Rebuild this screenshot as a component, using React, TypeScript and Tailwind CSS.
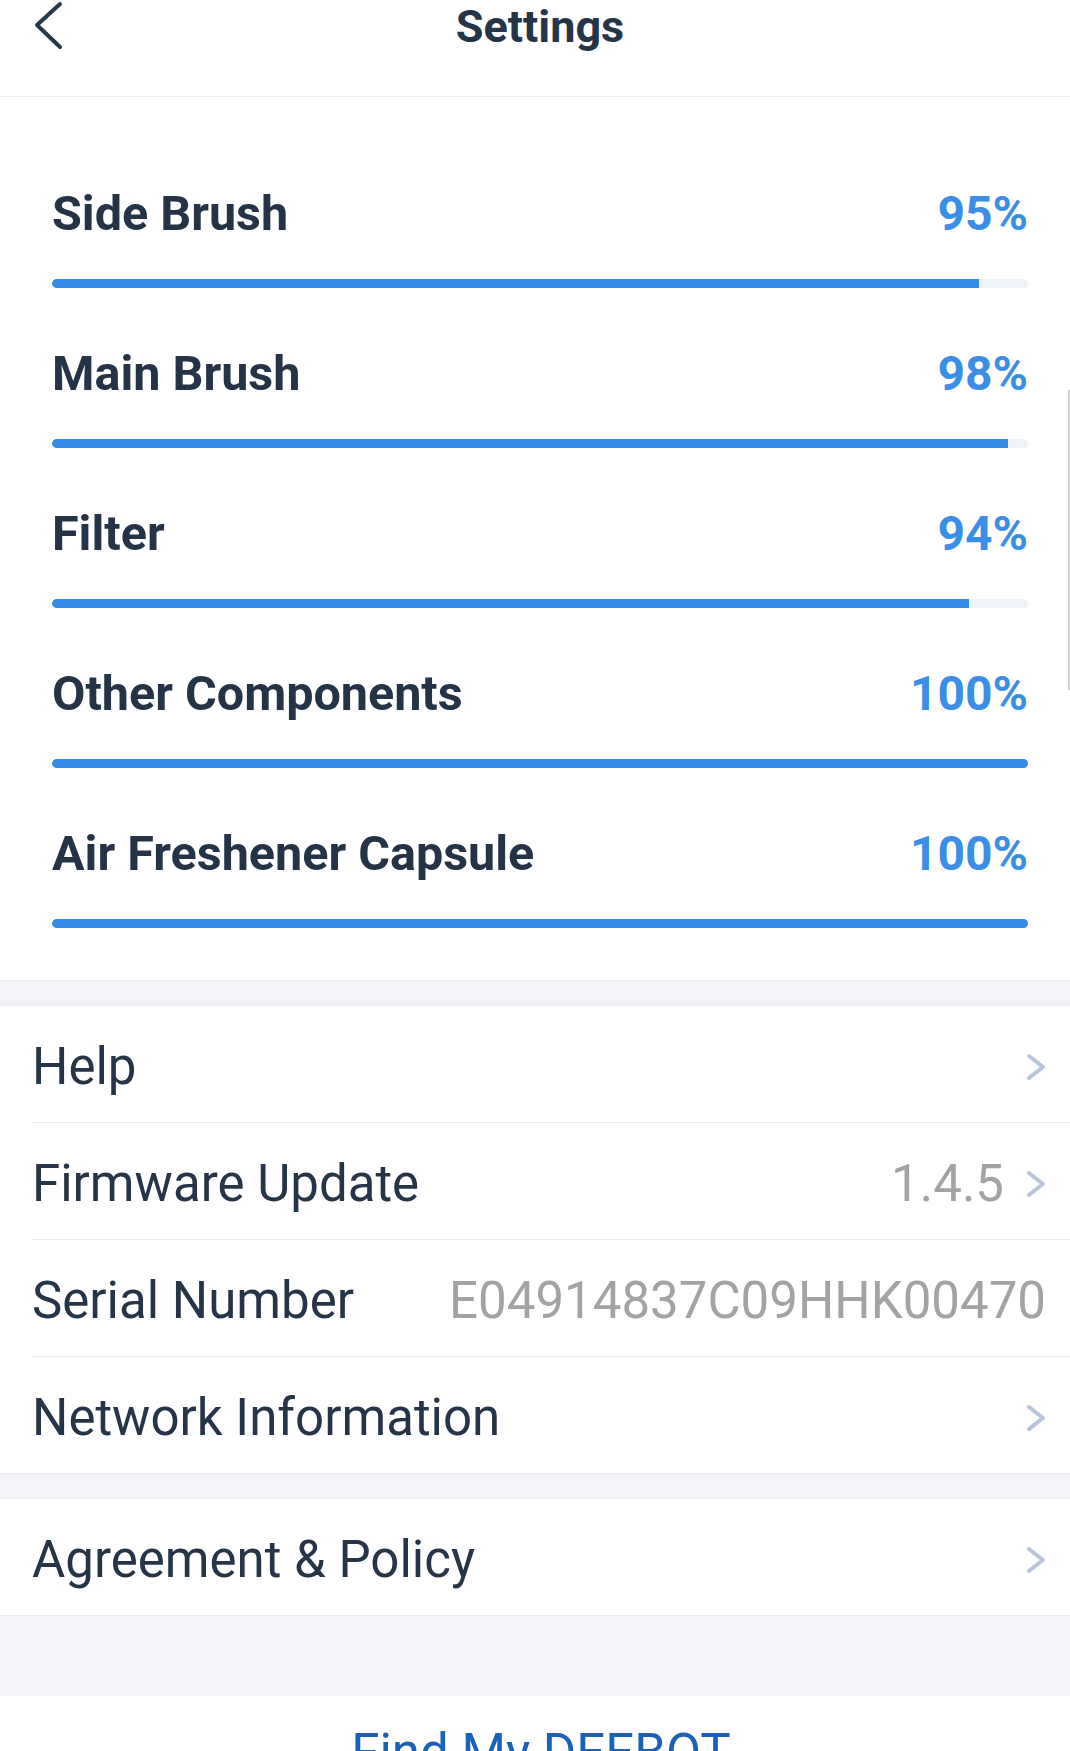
const PARTS: { name: string; value: number }[] = [
  { name: 'Side Brush', value: 95 },
  { name: 'Main Brush', value: 98 },
  { name: 'Filter', value: 94 },
  { name: 'Other Components', value: 100 },
  { name: 'Air Freshener Capsule', value: 100 },
];

function Chevron() {
  return (
    <svg width="20" height="28" viewBox="0 0 20 28" className="shrink-0">
      <path d="M3 3 L17 14 L3 25" fill="none" stroke="#b7c4d9" strokeWidth="4" strokeLinecap="round" strokeLinejoin="round" />
    </svg>
  );
}

function Row({ label, value, arrow = true, last = false }: { label: string; value?: string; arrow?: boolean; last?: boolean }) {
  return (
    <div className={`flex items-center justify-between pt-[6px] pr-[24px] ${last ? 'h-[116px]' : 'h-[117px] border-b border-[#e8eaee]'}`}>
      <span className="text-[51px] text-[#253446]">{label}</span>
      <div className="flex items-center gap-[22px]">
        {value && <span className="text-[51px] text-[#a3a3a6]">{value}</span>}
        {arrow && <Chevron />}
      </div>
    </div>
  );
}

export default function App() {
  return (
    <div className="relative w-[1070px] min-h-[1751px] bg-white font-['Roboto',sans-serif] overflow-hidden">
      <header className="h-[97px] border-b border-[#eceef1] flex items-start">
        <div className="w-[130px]">
          <svg width="32" height="50" viewBox="0 0 32 50" className="ml-[33px] mt-[1px]">
            <path d="M27 3 L4 24 L27 46" fill="none" stroke="#27384a" strokeWidth="4" strokeLinecap="round" strokeLinejoin="round" />
          </svg>
        </div>
        <h1 className="flex-1 text-center text-[45px] leading-[54px] font-bold text-[#253547]">Settings</h1>
        <div className="w-[120px]" />
      </header>

      <section className="pt-[87px] pb-[52px] pl-[52px] pr-[42px] flex flex-col gap-[56px]">
        {PARTS.map((p) => (
          <div key={p.name}>
            <div className="flex justify-between h-[60px] leading-[60px]">
              <span className="text-[48.5px] font-bold text-[#243446]">{p.name}</span>
              <span className="text-[48px] font-bold text-[#3a8ee6]">{p.value}%</span>
            </div>
            <div className="mt-[35px] h-[9px] rounded-full bg-[#eef3f9] overflow-hidden">
              <div className="h-full rounded-l-full bg-[#348be6]" style={{ width: `${p.value}%` }} />
            </div>
          </div>
        ))}
      </section>

      <div className="h-[26px] bg-[#f3f4f8] border-y border-[#e9ebef]" />

      <div className="pl-[32px]">
        <Row label="Help" />
        <Row label="Firmware Update" value="1.4.5" />
        <Row label="Serial Number" value="E04914837C09HHK00470" arrow={false} />
        <Row label="Network Information" last />
      </div>

      <div className="h-[26px] bg-[#f3f4f8] border-y border-[#e9ebef]" />

      <div className="pl-[32px]">
        <Row label="Agreement & Policy" last />
      </div>

      <div className="h-[81px] bg-[#f3f4f8] border-t border-[#e9ebef]" />

      <div className="pt-[27px] pb-[40px] pl-[12px] text-center text-[51px] leading-[60px] text-[#1a62b7]">Find My DEEBOT</div>

      <div className="absolute right-0 top-[390px] w-[2px] h-[300px] bg-[#d2d2d2]" />
    </div>
  );
}
